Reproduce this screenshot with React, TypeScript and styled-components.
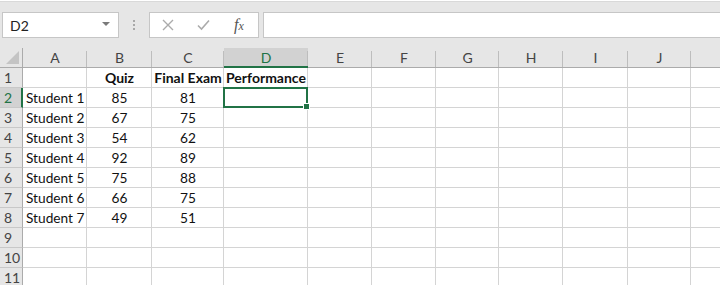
import * as React from 'react'
import styled, { createGlobalStyle } from 'styled-components'

const GRID = '#d4d4d4'
const GREEN = '#217346'
const HEAD_BG = '#e6e6e6'

const COLS = ['A', 'B', 'C', 'D', 'E', 'F', 'G', 'H', 'I', 'J', 'K']
const WIDTHS = [23, 64, 65, 72, 84, 64, 64, 63, 64, 65, 63, 80]

type Align = 'left' | 'center'
type CellData = { text: string; align: Align; bold?: boolean }

const rows: Array<Array<CellData | null>> = [
    [null, { text: 'Quiz', align: 'center', bold: true }, { text: 'Final Exam', align: 'center', bold: true }, { text: 'Performance', align: 'center', bold: true }],
    [{ text: 'Student 1', align: 'left' }, { text: '85', align: 'center' }, { text: '81', align: 'center' }],
    [{ text: 'Student 2', align: 'left' }, { text: '67', align: 'center' }, { text: '75', align: 'center' }],
    [{ text: 'Student 3', align: 'left' }, { text: '54', align: 'center' }, { text: '62', align: 'center' }],
    [{ text: 'Student 4', align: 'left' }, { text: '92', align: 'center' }, { text: '89', align: 'center' }],
    [{ text: 'Student 5', align: 'left' }, { text: '75', align: 'center' }, { text: '88', align: 'center' }],
    [{ text: 'Student 6', align: 'left' }, { text: '66', align: 'center' }, { text: '75', align: 'center' }],
    [{ text: 'Student 7', align: 'left' }, { text: '49', align: 'center' }, { text: '51', align: 'center' }],
    [],
    [],
    [],
]

const GlobalStyle = createGlobalStyle`
    html, body {
        margin: 0;
        padding: 0;
        width: 720px;
        height: 285px;
        overflow: hidden;
        background: #fff;
    }
    body {
        font-family: Lato, "Open Sans", sans-serif;
    }
`

const Window = styled.div`
    width: 720px;
    height: 285px;
    overflow: hidden;
    display: flex;
    flex-direction: column;
`

const Toolbar = styled.div`
    flex-shrink: 0;
    height: 47px;
    box-sizing: border-box;
    background: ${HEAD_BG};
    border-top: 1px solid #d9d9d9;
    margin-top: 1px;
    padding: 10px 0 0 2px;
    display: flex;
    align-items: flex-start;
`

const NameBox = styled.div`
    width: 117px;
    height: 26px;
    box-sizing: border-box;
    background: #fff;
    border: 1px solid #c6c6c6;
    display: flex;
    align-items: center;
    justify-content: space-between;
    padding: 0 8px 0 7px;
    font-size: 14px;
    color: #222;
`

const DropArrow = styled.span`
    width: 0;
    height: 0;
    border-left: 4px solid transparent;
    border-right: 4px solid transparent;
    border-top: 4px solid #7a7a7a;
    margin-top: -2px;
`

const Grip = styled.div`
    width: 30px;
    height: 26px;
    display: flex;
    flex-direction: column;
    align-items: center;
    justify-content: center;
    gap: 2px;
    span {
        width: 2px;
        height: 2px;
        background: #a8a8a8;
    }
`

const IconBox = styled.div`
    width: 110px;
    height: 26px;
    box-sizing: border-box;
    background: #fff;
    border: 1px solid #c6c6c6;
    display: flex;
    align-items: center;
    padding-left: 12px;
    gap: 13px;
`

const Fx = styled.span`
    font-family: "Liberation Serif", serif;
    font-style: italic;
    font-size: 16px;
    color: #555;
    margin-left: 11px;
    sub {
        font-size: 12px;
        vertical-align: baseline;
    }
`

const FormulaInput = styled.div`
    flex: 1;
    height: 26px;
    margin-left: 4px;
    box-sizing: border-box;
    background: #fff;
    border: 1px solid #c6c6c6;
    border-right: none;
`

const Sheet = styled.div`
    flex-shrink: 0;
    display: grid;
    grid-template-columns: ${WIDTHS.map(w => `${w}px`).join(' ')};
    grid-auto-rows: 20px;
`

const ColHead = styled.div<{ $selected?: boolean }>`
    box-sizing: border-box;
    background: ${p => (p.$selected ? '#d2d2d2' : HEAD_BG)};
    border-bottom: ${p => (p.$selected ? `2px solid ${GREEN}` : '1px solid #ababab')};
    display: flex;
    align-items: center;
    justify-content: center;
    font-size: 14px;
    color: ${p => (p.$selected ? GREEN : '#444')};
    position: relative;
    &::after {
        content: '';
        position: absolute;
        right: 0;
        top: 3px;
        bottom: 0;
        width: 1px;
        background: #bdbdbd;
    }
`

const Corner = styled.div`
    box-sizing: border-box;
    background: ${HEAD_BG};
    border-bottom: 1px solid #ababab;
    border-right: 1px solid #ababab;
    position: relative;
    &::after {
        content: '';
        position: absolute;
        right: 3px;
        bottom: 3px;
        width: 0;
        height: 0;
        border-left: 13px solid transparent;
        border-bottom: 13px solid #c4c4c4;
    }
`

const RowHead = styled.div<{ $selected?: boolean }>`
    box-sizing: border-box;
    background: ${p => (p.$selected ? '#d2d2d2' : HEAD_BG)};
    border-bottom: 1px solid #c8c8c8;
    border-right: ${p => (p.$selected ? `2px solid ${GREEN}` : '1px solid #ababab')};
    display: flex;
    align-items: center;
    padding-left: 4px;
    font-size: 14px;
    color: ${p => (p.$selected ? GREEN : '#444')};
`

const Cell = styled.div<{ $align: Align; $bold?: boolean }>`
    box-sizing: border-box;
    border-right: 1px solid ${GRID};
    border-bottom: 1px solid ${GRID};
    display: flex;
    align-items: center;
    justify-content: ${p => (p.$align === 'center' ? 'center' : 'flex-start')};
    padding: 0 2px 0 3px;
    font-size: ${p => (p.$bold ? '14px' : '13.7px')};
    font-weight: ${p => (p.$bold ? 700 : 400)};
    color: #111;
    white-space: nowrap;
    overflow: visible;
    position: relative;
`

const Selection = styled.div`
    position: absolute;
    left: -1px;
    top: -1px;
    right: -1px;
    bottom: -1px;
    border: 2px solid ${GREEN};
    pointer-events: none;
    z-index: 2;
`

const FillHandle = styled.div`
    position: absolute;
    right: -4px;
    bottom: -4px;
    width: 5px;
    height: 5px;
    background: ${GREEN};
    border: 1px solid #fff;
`

const SELECTED = { row: 2, col: 'D' }

export default function App() {
    return (
        <Window>
            <GlobalStyle />
            <Toolbar>
                <NameBox>
                    D2
                    <DropArrow />
                </NameBox>
                <Grip>
                    <span />
                    <span />
                    <span />
                </Grip>
                <IconBox>
                    <svg width="12" height="12" viewBox="0 0 12 12">
                        <path d="M1 1 L11 11 M11 1 L1 11" stroke="#ababab" strokeWidth="1.4" fill="none" />
                    </svg>
                    <svg width="13" height="12" viewBox="0 0 13 12" style={{ marginLeft: 10 }}>
                        <path d="M1 6.5 L4.5 10 L12 1.5" stroke="#ababab" strokeWidth="1.6" fill="none" />
                    </svg>
                    <Fx>
                        f<sub>x</sub>
                    </Fx>
                </IconBox>
                <FormulaInput />
            </Toolbar>
            <Sheet>
                <Corner />
                {COLS.map(c => (
                    <ColHead key={c} $selected={c === SELECTED.col}>
                        {c === 'K' ? '' : c}
                    </ColHead>
                ))}
                {rows.map((cells, r) => {
                    const rowNum = r + 1
                    return (
                        <React.Fragment key={rowNum}>
                            <RowHead $selected={rowNum === SELECTED.row}>{rowNum}</RowHead>
                            {COLS.map((c, ci) => {
                                const data = cells[ci]
                                const isSel = rowNum === SELECTED.row && c === SELECTED.col
                                return (
                                    <Cell key={c} $align={data?.align ?? 'left'} $bold={data?.bold}>
                                        {data?.text}
                                        {isSel && (
                                            <Selection>
                                                <FillHandle />
                                            </Selection>
                                        )}
                                    </Cell>
                                )
                            })}
                        </React.Fragment>
                    )
                })}
            </Sheet>
        </Window>
    )
}
